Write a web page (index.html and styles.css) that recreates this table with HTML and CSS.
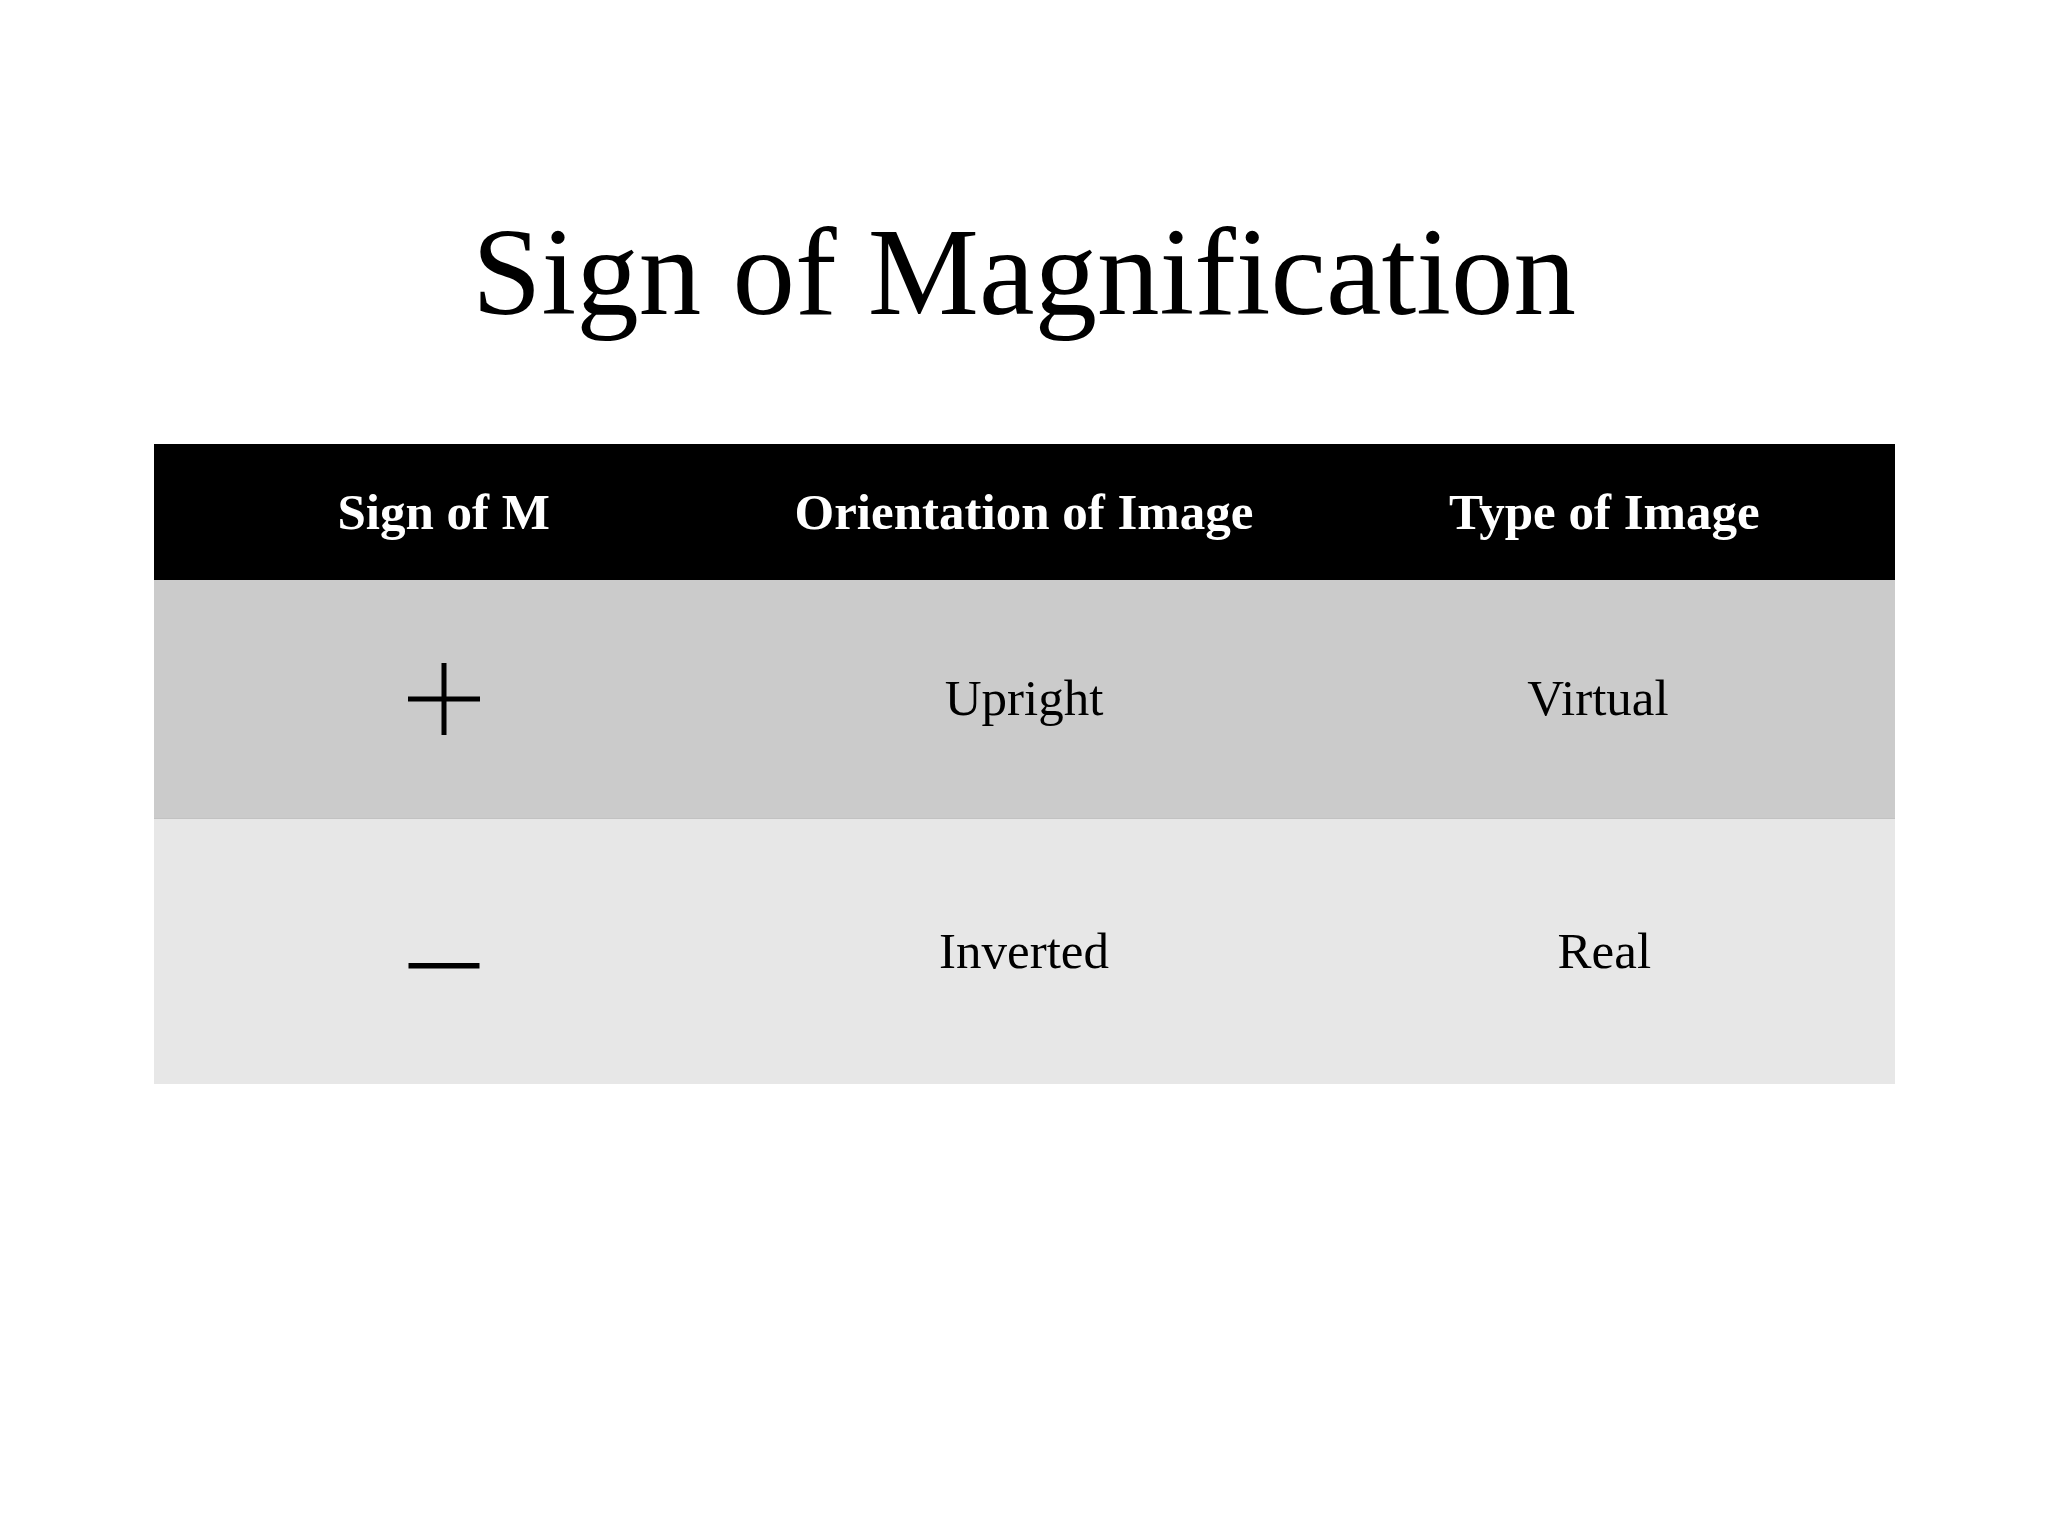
FILE: index.html
```html
<!DOCTYPE html>
<html lang="en">
<head>
<meta charset="utf-8">
<title>Sign of Magnification</title>
<link rel="stylesheet" href="styles.css">
</head>
<body>
<main class="slide">
  <h1 class="title">Sign of Magnification</h1>
  <table class="mag-table">
    <thead>
      <tr class="head-row">
        <th>Sign of M</th>
        <th>Orientation of Image</th>
        <th>Type of Image</th>
      </tr>
    </thead>
    <tbody>
      <tr class="row-dark">
        <td>
          <svg class="sign" width="72" height="72" viewBox="0 0 72 72" aria-label="+">
            <rect x="0" y="33.5" width="72" height="5" fill="#000"/>
            <rect x="33.5" y="0" width="5" height="72" fill="#000"/>
          </svg>
        </td>
        <td>Upright</td>
        <td>Virtual&nbsp;</td>
      </tr>
      <tr class="row-light">
        <td>
          <svg class="sign" width="72" height="72" viewBox="0 0 72 72" aria-label="−">
            <rect x="0.5" y="48" width="71" height="5.5" fill="#000"/>
          </svg>
        </td>
        <td>Inverted</td>
        <td>Real</td>
      </tr>
    </tbody>
  </table>
</main>
</body>
</html>
```

FILE: styles.css
```css
html, body {
  margin: 0;
  padding: 0;
  background: #ffffff;
}

body {
  width: 2048px;
  height: 1536px;
  font-family: "Liberation Serif", "Times New Roman", serif;
  color: #000;
}

.slide {
  display: flex;
  flex-direction: column;
  align-items: center;
  padding-top: 210px;
}

.title {
  margin: 0;
  font-size: 125px;
  font-weight: 400;
  line-height: 1;
  text-align: center;
}

.mag-table {
  margin-top: 109px;
  width: 1741px;
  border-collapse: collapse;
  table-layout: fixed;
}

.mag-table th,
.mag-table td {
  width: 33.333%;
  padding: 0;
  text-align: center;
  vertical-align: middle;
  font-size: 51px;
  line-height: 1;
}

.head-row {
  background: #000;
  height: 136px;
}

.head-row th {
  color: #fff;
  font-weight: 700;
}

.row-dark {
  background: #cbcbcb;
  height: 238px;
  border-bottom: 1px solid #c2c2c2;
}

.row-light {
  background: #e7e7e7;
  height: 266px;
}

.sign {
  display: block;
  margin: 0 auto;
}
```
